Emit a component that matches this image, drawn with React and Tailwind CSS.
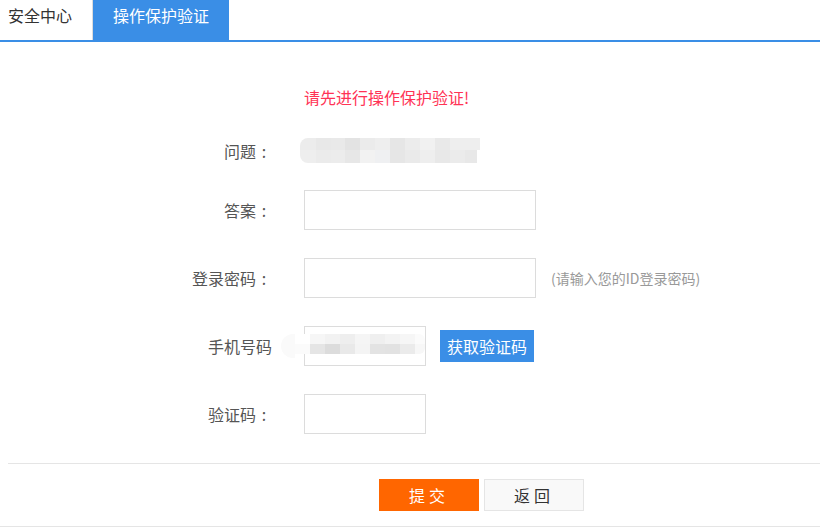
import React from "react";

const font = { fontFamily: '"Microsoft YaHei", "Noto Sans CJK SC", "Noto Sans", sans-serif' };

function Mosaic({ rows }) {
  return (
    <div className="flex flex-col">
      {rows.map((r, i) => (
        <div key={i} className="flex" style={{ marginLeft: r.offset || 0 }}>
          {r.cells.map((c, j) => (
            <div key={j} style={{ width: c[0], height: r.h, background: c[1], borderRadius: c[2] || 0 }} />
          ))}
        </div>
      ))}
    </div>
  );
}

function Row({ label, colon = true, children, h = 40, mt = 28 }) {
  return (
    <div className="flex items-center" style={{ marginTop: mt, height: h }}>
      <div className="w-[272px] shrink-0 text-right text-[16px] text-[#555]">
        {label}
        {colon && <span className="inline-block w-[16px] text-center">:</span>}
      </div>
      <div className="ml-[32px] flex items-center">{children}</div>
    </div>
  );
}

export default function App() {
  const qRows = [
    {
      h: 12,
      cells: [
        [16, "#ececec", "8px 0 0 0"],
        [15, "#e8e8e8"],
        [14, "#e9e9e9"],
        [15, "#e3e3e3"],
        [15, "#ebebeb"],
        [15, "#eeeeee"],
        [15, "#e6e6e6"],
        [15, "#ececec"],
        [15, "#f1f1f1"],
        [15, "#e9e9e9"],
        [30, "#eeeeee"],
      ],
    },
    {
      h: 13,
      cells: [
        [16, "#eeeeee", "0 0 0 8px"],
        [15, "#ebebeb"],
        [14, "#ececec"],
        [15, "#e7e7e7"],
        [15, "#f2f2f2"],
        [15, "#eff0f2"],
        [15, "#e6e6e6"],
        [15, "#eaeaea"],
        [15, "#eeeeee"],
        [15, "#e8e8e8"],
        [15, "#ebebeb"],
        [12, "#e8e8e8"],
      ],
    },
  ];
  const pRows = [
    {
      h: 10,
      cells: [
        [15, "#ffffff"],
        [15, "#f6f6f6"],
        [15, "#f2f2f2"],
        [15, "#eeeeee"],
        [15, "#f5f5f5"],
        [15, "#efefef"],
        [15, "#f3f3f3"],
        [15, "#f6f6f6"],
        [10, "#fbfbfb", "0 6px 0 0"],
      ],
    },
    {
      h: 10,
      cells: [
        [15, "#fbfbfb"],
        [15, "#e5e5e5"],
        [15, "#dcdcdc"],
        [15, "#e9e9e9"],
        [15, "#f4f4f4"],
        [15, "#e3e3e3"],
        [15, "#e2e2e2"],
        [15, "#ebebeb"],
        [10, "#f7f7f7", "0 0 6px 0"],
      ],
    },
  ];

  return (
    <div className="w-[820px] h-[531px] bg-white overflow-hidden" style={font}>
      {/* tabs */}
      <div className="flex h-[42px] border-b-2 border-[#3a8ee6]">
        <div className="w-[92px] pl-[8px] leading-[30px] text-[16px] text-[#333]">安全中心</div>
        <div className="w-[1px] bg-[#dcdcdc]" />
        <div className="w-[136px] bg-[#3a8ee6] text-center leading-[30px] text-[16px] text-white">操作保护验证</div>
      </div>

      <div className="pt-[40px]">
        <div className="flex h-[30px] items-center pl-[304px] text-[16px] text-[#ff3355]">请先进行操作保护验证!</div>

        <Row label="问题" h={30} mt={24}>
          <div className="-ml-[4px] -mt-[2px]">
            <Mosaic rows={qRows} />
          </div>
        </Row>

        <Row label="答案" mt={24}>
          <div className="w-[232px] h-[40px] border border-[#dcdcdc] bg-white" />
        </Row>

        <Row label="登录密码">
          <div className="w-[232px] h-[40px] border border-[#dcdcdc] bg-white" />
          <span className="ml-[15px] text-[14px] text-[#999]">(请输入您的ID登录密码)</span>
        </Row>

        <Row label="手机号码" colon={false}>
          <div className="relative w-[122px] h-[40px] border border-[#dcdcdc] bg-white">
            <div className="absolute left-[-24px] top-[7px] h-[24px] w-[14px] rounded-l-full bg-[#fafafa]" />
            <div className="absolute left-[-10px] top-[7px]">
              <Mosaic rows={pRows} />
            </div>
          </div>
          <button className="ml-[14px] h-[32px] w-[94px] bg-[#3a8ee6] text-[16px] text-white">获取验证码</button>
        </Row>

        <Row label="验证码">
          <div className="w-[122px] h-[40px] border border-[#dcdcdc] bg-white" />
        </Row>

        <div className="ml-[8px] mt-[29px] border-t border-[#e5e5e5]" />
        <div className="flex justify-start border-b border-[#e5e5e5] pl-[379px] pt-[15px] pb-[15px]">
          <button className="h-[32px] w-[100px] bg-[#ff6600] text-[16px] tracking-[4px] text-white">提交</button>
          <button className="ml-[5px] h-[32px] w-[100px] border border-[#e5e5e5] bg-[#f9f9f9] text-[16px] tracking-[4px] text-[#333]">返回</button>
        </div>
      </div>
    </div>
  );
}
